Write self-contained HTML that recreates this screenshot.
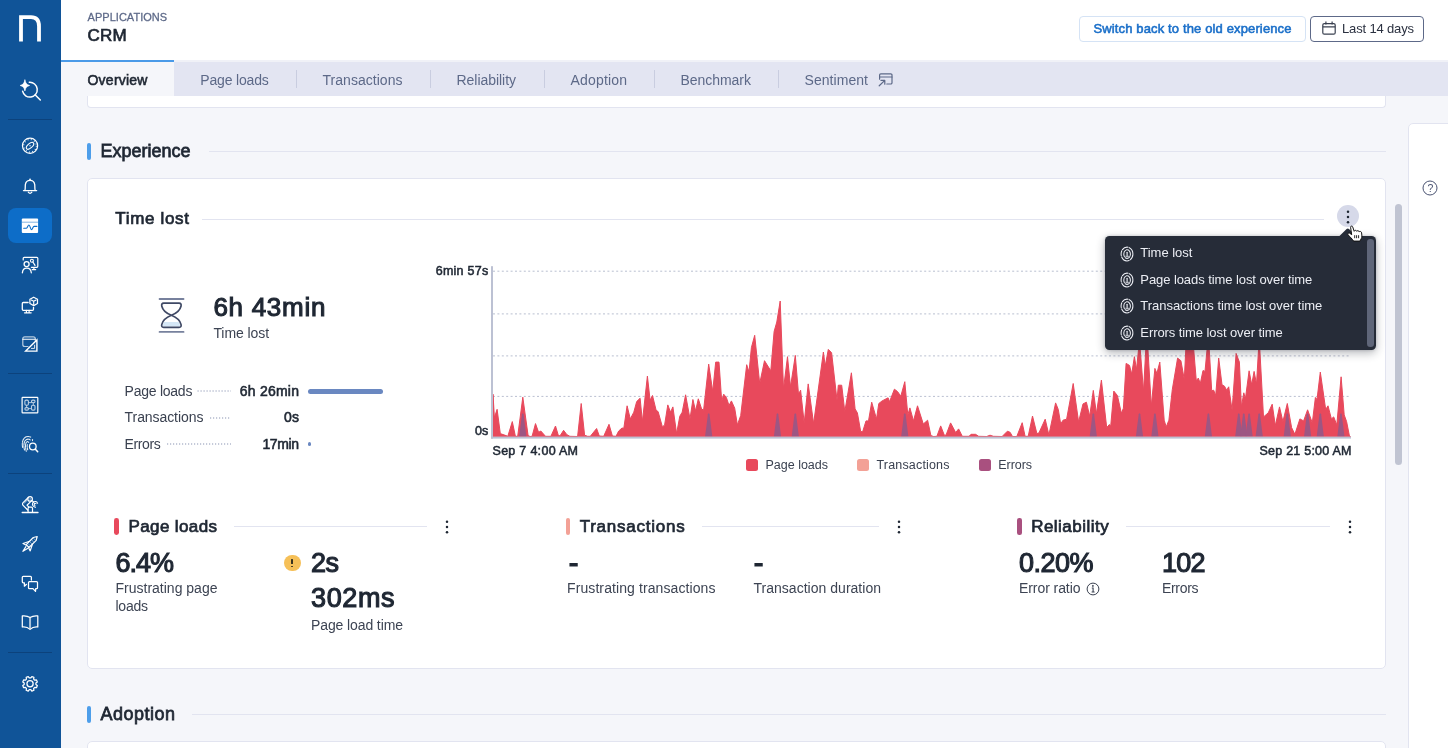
<!DOCTYPE html>
<html lang="en"><head><meta charset="utf-8"><title>CRM - Applications</title>
<style>
html,body{margin:0;padding:0;}
body{width:1448px;height:748px;overflow:hidden;position:relative;background:#f5f6fa;font-family:"Liberation Sans",Arial,sans-serif;}
.a{position:absolute;}
.t{position:absolute;white-space:nowrap;z-index:5;}
.card{position:absolute;background:#fff;border:1px solid #e2e4f0;box-sizing:border-box;}
.hl{position:absolute;height:1px;background:#e2e4f0;}
.sb svg{position:absolute;overflow:visible;}
.dot3 i{position:absolute;left:0;width:2.6px;height:2.6px;border-radius:50%;background:#1f2733;}
</style></head><body><div id="root" style="position:absolute;left:0;top:0;width:1448px;height:748px;will-change:transform;">
<div class="a" style="left:61px;top:0;width:1387px;height:61px;background:#fff"></div>
<div class="a" style="left:61px;top:60px;width:1387px;height:2px;background:#f0f1f7"></div>
<div class="a" style="left:61px;top:62px;width:1387px;height:34px;background:#e3e5f2"></div>
<div class="a" style="left:61px;top:60px;width:113px;height:36px;background:#f5f6fa;border-top:2px solid #4a9ae8;box-sizing:border-box"></div>
<div class="a" style="left:296px;top:70px;width:1px;height:18px;background:#c9cde0"></div><div class="a" style="left:430px;top:70px;width:1px;height:18px;background:#c9cde0"></div><div class="a" style="left:544px;top:70px;width:1px;height:18px;background:#c9cde0"></div><div class="a" style="left:654px;top:70px;width:1px;height:18px;background:#c9cde0"></div><div class="a" style="left:778px;top:70px;width:1px;height:18px;background:#c9cde0"></div>
<svg class="a" style="left:877px;top:71.700px" width="17" height="16" viewBox="0 0 17 16" fill="none" stroke="#5d6988" stroke-width="1.200" stroke-linecap="round" stroke-linejoin="round"><path d="M2.600,7.200 V3 a1.200,1.200 0 0 1 1.200,-1.200 H13.800 a1.200,1.200 0 0 1 1.200,1.200 V10.800 a1.200,1.200 0 0 1 -1.200,1.200 H9.800"/><path d="M2.600,5h12.400"/><path d="M2.200,13.800 L7.600,8.600 M4,8.400 H7.800 V12.200"/></svg>
<div class="a" style="left:1079px;top:16px;width:227px;height:26px;border:1px solid #d5e3f5;border-radius:4px;box-sizing:border-box;background:#fff"></div>
<div class="a" style="left:1310px;top:16px;width:114px;height:26px;border:1px solid #5d6988;border-radius:4px;box-sizing:border-box;background:#fff"></div>
<svg class="a" style="left:1321px;top:20px" width="16" height="16" viewBox="0 0 16 16" fill="none" stroke="#3a4150" stroke-width="1.200" stroke-linejoin="round"><rect x="1.800" y="3.600" width="12.400" height="10.600" rx="1.500"/><path d="M1.800,6.800h12.400M4.900,1.400v3M11.100,1.400v3"/></svg>
<div class="card" style="left:87px;top:96px;width:1299px;height:12px;border-radius:0 0 4px 4px;border-top:none"></div>
<div class="a" style="left:87px;top:143px;width:4px;height:17px;border-radius:2px;background:#4d9eea"></div>
<div class="hl" style="left:209px;top:151px;width:1177px"></div>
<div class="card" style="left:87px;top:178px;width:1299px;height:491px;border-radius:5px"></div>
<div class="hl" style="left:202px;top:219px;width:1122px"></div>
<div class="a" style="left:1337.100px;top:205.200px;width:21.800px;height:21.800px;border-radius:50%;background:#d6d9e9"></div>
<svg class="a" style="left:1343.90px;top:207.50px" width="8" height="18" viewBox="-4 -9 8 18"><circle cx="0" cy="-5.300" r="1.250" fill="#1f2733"/><circle cx="0" cy="0" r="1.250" fill="#1f2733"/><circle cx="0" cy="5.300" r="1.250" fill="#1f2733"/></svg>
<svg class="a" style="left:150px;top:290px" width="44" height="50" viewBox="150 290 44 50" fill="none" stroke-linecap="round" stroke-linejoin="round"><path d="M159.600,299h23.900M159.600,331.900h23.900" stroke="#77819d" stroke-width="1.900"/><path d="M164.300,322.100 H178.500 C179.600,323.500 180.100,325 179.900,326.500 H162.900 C162.700,325 163.200,323.500 164.300,322.100Z" fill="#d5e7f6"/><path d="M163.700,303.200 H179.100 Q181.700,303.300 181,306.200 C179.800,311.200 176,313.400 171.400,315.300 C166.800,313.400 163,311.200 161.800,306.200 Q161.100,303.300 163.700,303.200 Z M163.700,327.400 H179.100 Q181.700,327.300 181,324.400 C179.800,319.400 176,317.200 171.400,315.300 C166.800,317.200 163,319.400 161.800,324.400 Q161.100,327.300 163.700,327.400 Z" stroke="#3f4965" stroke-width="1.700"/></svg>
<svg class="a" style="left:0;top:390px" width="400" height="2"><line x1="197.5" x2="231" y1="1" y2="1" stroke="#b3b9cd" stroke-width="1.300" stroke-dasharray="1.200 1.800"/></svg>
<svg class="a" style="left:0;top:416.5px" width="400" height="2"><line x1="210" x2="231" y1="1" y2="1" stroke="#b3b9cd" stroke-width="1.300" stroke-dasharray="1.200 1.800"/></svg>
<svg class="a" style="left:0;top:442.5px" width="400" height="2"><line x1="167" x2="231" y1="1" y2="1" stroke="#b3b9cd" stroke-width="1.300" stroke-dasharray="1.200 1.800"/></svg>
<div class="a" style="left:307.700px;top:388.500px;width:75.600px;height:5.800px;border-radius:3px;background:#6a88c1"></div>
<div class="a" style="left:307.700px;top:441.800px;width:3.600px;height:4.600px;border-radius:2px;background:#6a88c1"></div>
<svg class="a" style="left:0;top:0;z-index:1" width="1448" height="748" viewBox="0 0 1448 748">
<line x1="493" x2="1351" y1="271.2" y2="271.2" stroke="#b9bfd0" stroke-width="1" stroke-dasharray="2 2.4"/>
<line x1="493" x2="1351" y1="313.9" y2="313.9" stroke="#b9bfd0" stroke-width="1" stroke-dasharray="2 2.4"/>
<line x1="493" x2="1351" y1="355.9" y2="355.9" stroke="#b9bfd0" stroke-width="1" stroke-dasharray="2 2.4"/>
<line x1="493" x2="1351" y1="396.4" y2="396.4" stroke="#b9bfd0" stroke-width="1" stroke-dasharray="2 2.4"/>
<path d="M493,436.6 L493.0,394.2 494.4,417.6 497.1,409.3 500.3,433.6 506.0,435.6 507.8,436.3 512.3,421.6 515.4,436.3 517.7,436.3 522.8,397.2 528.1,435.6 530.1,436.5 532.1,436.3 535.5,423.6 538.6,432.3 540.8,431.0 545.5,436.3 550.9,436.3 555.5,426.0 558.5,436.0 560.2,435.6 563.6,430.3 566.9,434.7 569.9,436.3 577.6,436.5 581.2,403.5 584.6,435.2 587.6,436.3 590.3,436.3 596.6,428.5 599.3,436.0 603.7,436.3 609.0,424.3 612.4,436.0 616.0,436.3 618.7,431.0 622.0,428.0 623.8,428.3 627.1,405.8 630.3,418.9 633.8,412.2 636.7,401.5 640.1,398.2 642.4,421.6 647.4,376.1 650.1,400.2 652.5,395.5 656.1,410.2 658.1,411.6 662.4,426.9 664.6,424.9 667.8,404.9 670.5,412.2 672.9,406.9 676.6,433.6 679.8,416.2 682.2,412.2 685.6,394.8 690.0,418.9 692.9,399.5 695.6,410.9 698.3,398.8 701.6,408.9 703.6,410.2 708.7,364.1 712.7,391.5 715.7,362.1 719.0,362.1 721.7,400.9 723.7,394.2 726.4,397.5 729.0,405.5 731.4,400.9 734.7,408.2 737.4,424.9 740.7,415.6 746.7,364.7 749.0,372.1 751.4,347.6 754.7,335.3 759.7,383.5 764.5,360.7 770.8,370.8 774.1,331.5 776.8,322.0 780.2,301.0 783.5,388.8 787.5,356.7 790.5,386.8 795.3,355.4 798.5,394.2 800.6,390.2 804.2,422.9 808.2,383.9 813.6,423.6 823.4,352.0 825.2,366.1 828.3,349.4 831.6,352.7 837.0,400.2 838.3,385.2 841.7,385.2 844.8,411.6 851.4,372.8 855.1,408.9 857.4,412.9 860.7,431.6 862.7,431.6 866.0,420.9 868.5,420.9 871.7,402.2 876.5,418.9 878.8,403.5 882.1,400.9 888.1,397.8 889.5,401.8 894.4,389.2 897.5,391.5 900.8,396.2 904.8,381.7 907.8,414.9 909.9,407.9 913.5,420.9 917.5,405.8 923.3,424.0 927.6,420.2 930.9,435.6 933.6,436.5 936.9,436.3 940.7,425.9 944.3,435.2 946.0,435.2 950.6,422.9 955.7,432.6 958.6,428.9 962.3,436.3 969.0,436.3 971.0,434.3 975.5,434.3 978.7,436.3 986.7,436.5 990.0,435.2 993.4,436.3 1002.1,436.5 1007.4,431.2 1010.1,432.3 1012.5,436.5 1016.8,436.5 1022.2,422.7 1025.1,436.3 1028.2,436.3 1032.5,416.0 1036.9,433.6 1038.9,433.0 1045.2,419.2 1048.9,435.0 1055.6,402.9 1058.3,409.5 1060.7,424.0 1063.0,420.2 1066.6,419.2 1073.2,383.5 1078.6,421.9 1083.0,403.9 1086.4,402.2 1089.7,416.2 1093.3,390.4 1096.4,413.6 1101.4,380.1 1106.7,427.6 1109.4,424.5 1110.7,426.3 1113.8,391.1 1117.4,395.5 1121.4,413.3 1123.4,408.2 1126.1,363.4 1129.5,365.4 1131.7,374.1 1134.4,356.7 1136.5,369.4 1139.5,340.0 1143.5,391.5 1146.8,330.0 1151.3,406.2 1154.9,368.4 1156.9,373.4 1159.8,362.1 1164.2,420.2 1166.2,426.9 1168.9,420.2 1172.3,389.5 1177.6,358.1 1180.9,360.7 1184.3,379.5 1186.5,335.0 1192.5,335.0 1196.3,380.8 1198.3,378.1 1200.3,383.5 1203.0,370.5 1205.0,371.4 1208.4,335.0 1211.7,390.8 1213.7,390.2 1215.7,395.5 1218.7,358.1 1222.0,384.8 1224.4,386.1 1226.7,390.2 1228.7,386.8 1232.1,410.2 1236.1,353.4 1239.4,362.1 1241.4,406.9 1243.8,392.8 1245.4,398.8 1249.1,370.8 1251.7,384.8 1254.1,371.4 1256.5,384.1 1259.2,338.0 1263.5,416.9 1268.2,412.9 1272.2,404.2 1275.3,425.6 1279.5,406.9 1282.9,421.6 1287.3,403.5 1291.6,427.6 1294.9,434.3 1299.9,418.9 1303.6,420.9 1307.6,409.8 1312.3,422.9 1315.4,397.5 1317.0,399.5 1320.3,372.1 1325.7,409.5 1328.0,405.8 1331.4,418.9 1333.7,416.9 1336.8,424.9 1341.1,376.8 1344.2,414.9 1346.6,421.6 1349.5,436.3 L1350.5,436.6 Z" fill="#e8495c" stroke="#e8495c" stroke-width="1" stroke-linejoin="round"/>
<path d="M519.2,436.6 L522.0,414.2 Q522.8,412.4 523.6,414.2 L526.4,436.6 Z" fill="#9d5683"/>
<path d="M705.1,436.6 L707.9,414.2 Q708.7,412.4 709.5,414.2 L712.3,436.6 Z" fill="#9d5683"/>
<path d="M773.9,436.6 L776.7,414.2 Q777.5,412.4 778.3,414.2 L781.1,436.6 Z" fill="#9d5683"/>
<path d="M791.7,436.6 L794.5,414.2 Q795.3,412.4 796.1,414.2 L798.9,436.6 Z" fill="#9d5683"/>
<path d="M901.2,436.6 L904.0,414.2 Q904.8,412.4 905.6,414.2 L908.4,436.6 Z" fill="#9d5683"/>
<path d="M1089.7,436.6 L1092.5,414.2 Q1093.3,412.4 1094.1,414.2 L1096.9,436.6 Z" fill="#9d5683"/>
<path d="M1135.9,436.6 L1138.7,414.2 Q1139.5,412.4 1140.3,414.2 L1143.1,436.6 Z" fill="#9d5683"/>
<path d="M1151.3,436.6 L1154.1,414.2 Q1154.9,412.4 1155.7,414.2 L1158.5,436.6 Z" fill="#9d5683"/>
<path d="M1204.8,436.6 L1207.6,414.2 Q1208.4,412.4 1209.2,414.2 L1212.0,436.6 Z" fill="#9d5683"/>
<path d="M1235.2,436.6 L1238.0,414.2 Q1238.8,412.4 1239.6,414.2 L1242.4,436.6 Z" fill="#9d5683"/>
<path d="M1240.2,436.6 L1243.0,414.2 Q1243.8,412.4 1244.6,414.2 L1247.4,436.6 Z" fill="#9d5683"/>
<path d="M1245.5,436.6 L1248.3,414.2 Q1249.1,412.4 1249.9,414.2 L1252.7,436.6 Z" fill="#9d5683"/>
<path d="M1255.6,436.6 L1258.4,414.2 Q1259.2,412.4 1260.0,414.2 L1262.8,436.6 Z" fill="#9d5683"/>
<path d="M1283.7,436.6 L1286.5,414.2 Q1287.3,412.4 1288.1,414.2 L1290.9,436.6 Z" fill="#9d5683"/>
<path d="M1304.0,436.6 L1306.8,414.2 Q1307.6,412.4 1308.4,414.2 L1311.2,436.6 Z" fill="#9d5683"/>
<path d="M1316.7,436.6 L1319.5,414.2 Q1320.3,412.4 1321.1,414.2 L1323.9,436.6 Z" fill="#9d5683"/>
<path d="M1337.3,436.6 L1340.1,414.2 Q1340.9,412.4 1341.7,414.2 L1344.5,436.6 Z" fill="#9d5683"/>
<rect x="491" y="266.200" width="2" height="172.400" fill="#bcc1d3"/>
<rect x="491" y="436.600" width="860" height="2" fill="#bcc1d3"/>
</svg>
<div class="a" style="left:745.600px;top:459.200px;width:12px;height:12px;border-radius:2.500px;background:#e8495c"></div>
<div class="a" style="left:856.600px;top:459.200px;width:12px;height:12px;border-radius:2.500px;background:#f3a196"></div>
<div class="a" style="left:978.600px;top:459.200px;width:12px;height:12px;border-radius:2.500px;background:#a9507f"></div>
<div class="a" style="left:114px;top:518px;width:4.800px;height:17px;border-radius:2.400px;background:#e8495c"></div>
<div class="hl" style="left:234px;top:526px;width:193px"></div>
<svg class="a" style="left:443.00px;top:517.50px" width="8" height="18" viewBox="-4 -9 8 18"><circle cx="0" cy="-5.300" r="1.250" fill="#1f2733"/><circle cx="0" cy="0" r="1.250" fill="#1f2733"/><circle cx="0" cy="5.300" r="1.250" fill="#1f2733"/></svg>
<div class="a" style="left:566px;top:518px;width:4px;height:17px;border-radius:2px;background:#f3a196"></div>
<div class="hl" style="left:702px;top:526px;width:177px"></div>
<svg class="a" style="left:894.50px;top:517.50px" width="8" height="18" viewBox="-4 -9 8 18"><circle cx="0" cy="-5.300" r="1.250" fill="#1f2733"/><circle cx="0" cy="0" r="1.250" fill="#1f2733"/><circle cx="0" cy="5.300" r="1.250" fill="#1f2733"/></svg>
<div class="a" style="left:1017px;top:518px;width:4.500px;height:17px;border-radius:2.200px;background:#a9507f"></div>
<div class="hl" style="left:1126px;top:526px;width:204px"></div>
<svg class="a" style="left:1346.00px;top:517.50px" width="8" height="18" viewBox="-4 -9 8 18"><circle cx="0" cy="-5.300" r="1.250" fill="#1f2733"/><circle cx="0" cy="0" r="1.250" fill="#1f2733"/><circle cx="0" cy="5.300" r="1.250" fill="#1f2733"/></svg>
<div class="a" style="left:284px;top:554.500px;width:16.800px;height:16.800px;border-radius:50%;background:#f6c058"></div>
<div class="a" style="left:291.200px;top:558.800px;width:1.800px;height:5.400px;background:#3a3320;border-radius:0.500px"></div><div class="a" style="left:291.200px;top:565.600px;width:1.800px;height:1.800px;background:#3a3320;border-radius:0.500px"></div>
<svg class="a" style="left:1086px;top:582px" width="14" height="14" viewBox="0 0 14 14" fill="none" stroke="#3a4150" stroke-width="1"><circle cx="7" cy="7" r="5.900"/><path d="M5.800,6h1.300v4M5.600,10h3" stroke-width="1.100"/><circle cx="6.900" cy="3.900" r="0.500" fill="#3a4150"/></svg>
<div class="a" style="left:87px;top:706px;width:4px;height:17px;border-radius:2px;background:#4d9eea"></div>
<div class="hl" style="left:192px;top:714px;width:1194px"></div>
<div class="card" style="left:87px;top:741px;width:1299px;height:20px;border-radius:5px 5px 0 0"></div>
<div class="card" style="left:1408px;top:123px;width:50px;height:640px;border-radius:5px 0 0 0"></div>
<svg class="a" style="left:1422px;top:179.600px" width="16" height="16" viewBox="0 0 16 16" fill="none" stroke="#4a5372" stroke-width="1"><circle cx="8" cy="8" r="7"/></svg>
<div class="a" style="left:1395.300px;top:204px;width:6.500px;height:261px;border-radius:3.500px;background:#c0c4d2"></div>
<div class="a" style="left:0;top:0;width:61px;height:748px;background:#105498;z-index:6">
<div class="a" style="left:8px;top:119.1px;width:44px;height:1.2px;background:#0c427c"></div>
<div class="a" style="left:8px;top:372.5px;width:44px;height:1.2px;background:#0c427c"></div>
<div class="a" style="left:8px;top:472.9px;width:44px;height:1.2px;background:#0c427c"></div>
<div class="a" style="left:8px;top:651.8px;width:44px;height:1.2px;background:#0c427c"></div>
<div class="a" style="left:7.900px;top:207.800px;width:44.200px;height:35.300px;border-radius:8px;background:#0d6dc8"></div>
<svg class="a" style="left:0;top:0" width="61" height="748" viewBox="0 0 61 748" fill="none" stroke="#fff" stroke-width="1.300" stroke-linecap="round" stroke-linejoin="round">
<path d="M21,41.400 V17.200 H31 C36.800,17.200 39,20.600 39,26.200 V41.400" stroke-width="3.800" stroke-linecap="butt" stroke-linejoin="miter"/>
<path d="M29.300,82.300 A7.400,7.400 0 1 1 22.600,91.200" stroke-width="1.500"/><path d="M35.300,95 L40.300,100" stroke-width="1.500"/>
<path d="M24.900,80.100 C25.500,83.300 26.700,84.700 29.600,85.500 C26.700,86.300 25.500,87.700 24.900,90.900 C24.300,87.700 23.100,86.300 20.200,85.500 C23.100,84.700 24.300,83.300 24.900,80.100 Z" fill="#fff" stroke="#fff" stroke-width="0.700"/>
<circle cx="30.050" cy="145.800" r="7.600" stroke-width="1.200"/>
<circle cx="30.050" cy="145.800" r="6.300" stroke-width="1.300" stroke-dasharray="0.900 2.400" stroke-linecap="butt" opacity="0.9"/>
<ellipse cx="30.050" cy="145.800" rx="4.500" ry="2.200" transform="rotate(-42 30.050 145.800)" stroke-width="1.100"/>
<circle cx="30.050" cy="145.800" r="0.800" fill="#fff" stroke="none" opacity="0.8"/>
<path d="M23.500,190.600 H36.600" stroke-width="1.400"/>
<path d="M24.900,190.400 C25.500,188.500 25.100,186 25.400,184.300 C25.900,181.400 27.800,180.300 30.050,180.300 C32.300,180.300 34.200,181.400 34.700,184.300 C35,186 34.600,188.500 35.200,190.400" stroke-width="1.300"/>
<circle cx="30.050" cy="179.300" r="0.900" fill="#fff" stroke="none"/>
<path d="M28.300,192.200 Q30.050,194.500 31.800,192.200" stroke-width="1.300"/>
<rect x="21.800" y="218.600" width="16.300" height="14.500" rx="1" fill="#fff" stroke="none"/>
<path d="M21.800,222.200 H38.100" stroke="#0d6dc8" stroke-width="0.700" opacity="0.75" stroke-linecap="butt"/>
<path d="M23.700,228.200 H26.400 C27.600,228.200 27.800,225 28.900,225 C30.100,225 30.400,229.600 31.500,229.600 C32.600,229.600 32.900,226.400 34.100,226.400 H36.900" stroke="#0d6dc8" stroke-width="1.100"/>
<path d="M23.200,260 V258.300 a1,1 0 0 1 1,-1 H36.800 a1,1 0 0 1 1,1 V266.300 a1,1 0 0 1 -1,1 H31.400" stroke-width="1.200"/>
<path d="M33.900,267.500 V269.500 M32.200,269.600 H35.700" stroke-width="1.200"/>
<circle cx="26.600" cy="264.100" r="2.500" stroke-width="1.300"/>
<path d="M22.400,272.800 C22.600,269.800 24.300,268.200 26.800,268.200 C29.300,268.200 31,269.800 31.300,272.800" stroke-width="1.300"/>
<circle cx="31.900" cy="260.700" r="1.500" stroke-width="1.100"/><path d="M32.900,262 L35,265.400" stroke-width="1.200"/>
<path d="M28.100,302.500 H23.300 a1,1 0 0 0 -1,1 V309.300 a1,1 0 0 0 1,1 H32.500 a1,1 0 0 0 1,-1 V307.300" stroke-width="1.300"/>
<path d="M26.400,310.400 V312.600 M29.100,310.400 V312.600 M24.500,312.800 H31.200" stroke-width="1.200"/>
<path d="M33.700,297.200 L37.500,299.300 V303.500 L33.700,305.600 L29.900,303.500 V299.300 Z" stroke-width="1.200"/>
<path d="M31.300,300 L33.700,301.300 L36.100,300 M33.700,301.300 V305.200" stroke-width="1.100"/>
<path d="M28,346.500 H24.800 a2,2 0 0 1 -2,-2 V338.800 a2,2 0 0 1 2,-2 H33.300 a2,2 0 0 1 2,2 V340.600" stroke-width="1.200" opacity="0.7"/>
<path d="M22.800,339.300 H35.300" stroke-width="1.100"/>
<path d="M25.700,351.100 L36.900,340 V351.100 Z" stroke-width="1.400" stroke-linejoin="miter"/>
<path d="M34.600,345.200 V348.400 H31.400" stroke-width="1" opacity="0.85"/>
<rect x="22.100" y="397.300" width="15.700" height="15.500" rx="0.600" stroke-width="1.200"/>
<g opacity="0.72" stroke-width="1.100"><rect x="24.900" y="400.100" width="3.500" height="5.200" rx="1.200"/><rect x="31.500" y="400.100" width="3.500" height="2.700" rx="1.200"/><rect x="24.900" y="407.600" width="3.500" height="2.500" rx="1.200"/><rect x="31.500" y="405.200" width="3.500" height="4.900" rx="1.200"/><path d="M28.400,402.600 H31.500 M28.400,408.600 H31.500 M26.600,405.300 V407.600 M33.300,402.800 V405.200" stroke-width="0.900"/></g>
<g stroke-width="1.050" opacity="0.92"><path d="M22.600,447.500 C21.800,443 22.400,438.200 26.400,436.800 C28,436.300 29.600,436.600 30.700,437.100" stroke-dasharray="4.500 0.900"/><path d="M24.500,450 C23.400,446 23.600,440.800 26.600,439.400 C28,438.800 29.400,439.200 30.200,440" stroke-dasharray="3.800 0.900"/><path d="M26.300,451.300 C25.200,447.500 25.100,443.200 26.800,441.900 C27.600,441.400 28.400,441.700 28.700,442.400" stroke-dasharray="3 0.900"/><path d="M27.300,444.500 C27,446.500 27.200,448.500 27.900,450.300" stroke-dasharray="2.200 0.900"/><path d="M32.500,439.600 V440.600"/></g>
<circle cx="32.800" cy="446.500" r="3.300" stroke-width="1.300"/><path d="M35.400,449.200 L37.700,451.700" stroke-width="1.500"/>
<path d="M22.200,512.500 H38" stroke-width="1.300"/>
<path d="M28.100,512.300 V508.200 a1.100,1.100 0 0 1 1.100,-1.100 H31.400 a1.100,1.100 0 0 1 1.100,1.100 V512.300" stroke-width="1.200"/>
<path d="M28.300,497.500 L23.100,502.700 a1.900,1.900 0 0 0 0,2.700 L27.700,510 M31.700,500.600 L27,505.200 L28.600,506.900" stroke-width="1.200"/>
<circle cx="30.100" cy="498.900" r="2.300" stroke-width="1.200"/><circle cx="30.100" cy="498.900" r="0.600" fill="#fff" stroke="none"/>
<path d="M24.600,502.800 L27.200,500.200 M25.600,507.600 L27,509" stroke-width="0.900" opacity="0.8"/>
<path d="M32.400,500.800 L33.600,502.200" stroke-width="1.200"/>
<path d="M37.600,503.300 C37,501.500 35,500.900 33.500,502 C32,503.100 32.100,505.300 33.600,506.400 L35.500,507.300 M36,503.600 C35.400,503 34.500,503.200 34.200,503.900 C34,504.500 34.300,505.100 34.900,505.400" stroke-width="1.100"/>
<path d="M37.200,536.500 L33.300,537.500 L26.200,544.700 L29,547.500 L36.200,540.400 Z" stroke-width="1.200"/>
<path d="M29.600,541.300 L23,543.500 L26.400,545.300 M32.400,544.200 L30.200,550.900 L28.400,547.500" stroke-width="1.200"/>
<path d="M25.900,546.600 L22.900,551.300 L27.500,548.400" stroke-width="1.200"/>
<path d="M28.300,543.800 L30,545.500 M30.100,542 L31.800,543.700 M31.900,540.200 L33.600,541.900 M33.700,538.400 L35.400,540.100" stroke-width="0.700" opacity="0.7"/>
<path d="M31.400,580 V577.300 a1,1 0 0 0 -1,-1 H23.300 a1,1 0 0 0 -1,1 V581.800 a1,1 0 0 0 1,1 H24.400 V586.200 L26.500,584.300" stroke-width="1.250"/>
<path d="M29.500,581.500 H36.500 a1,1 0 0 1 1,1 V587.700 a1,1 0 0 1 -1,1 H35.700 L35.500,591.400 L33,588.700 H29.500 a1,1 0 0 1 -1,-1 V582.500 a1,1 0 0 1 1,-1 Z" stroke-width="1.250"/>
<path d="M30.050,617.500 C28,616.100 25,615.600 22.300,615.900 V627 C25,626.700 28,627.400 30.050,629.400 C32.100,627.400 35.100,626.700 37.800,627 V615.900 C35.100,615.600 32.100,616.100 30.050,617.500 Z" stroke-width="1.250"/>
<path d="M30.050,618 V628.600" stroke-width="2" opacity="0.65" stroke-linecap="butt"/>
<path d="M35.90,684.57 L37.33,685.61 L36.48,687.66 L34.73,687.39 L33.64,688.48 L33.91,690.23 L31.86,691.08 L30.82,689.65 L29.28,689.65 L28.24,691.08 L26.19,690.23 L26.46,688.48 L25.37,687.39 L23.62,687.66 L22.77,685.61 L24.20,684.57 L24.20,683.03 L22.77,681.99 L23.62,679.94 L25.37,680.21 L26.46,679.12 L26.19,677.37 L28.24,676.52 L29.28,677.95 L30.82,677.95 L31.86,676.52 L33.91,677.37 L33.64,679.12 L34.73,680.21 L36.48,679.94 L37.33,681.99 L35.90,683.03 Z" stroke-width="1.250" stroke-linejoin="round"/>
<circle cx="30.050" cy="683.800" r="3.100" stroke-width="1.250"/>
</svg></div>
<div class="a" style="left:1105.300px;top:236.200px;width:270.500px;height:113.400px;border-radius:4.500px;background:#262c38;box-shadow:0 3px 10px rgba(30,35,50,0.33), 0 0 3px rgba(30,35,50,0.2);z-index:4"></div>
<svg class="a" style="left:1336px;top:226px;z-index:4" width="24" height="12" viewBox="1336 226 24 12"><path d="M1339,236.500 L1346.600,229 Q1347.800,227.800 1349,229 L1356.600,236.500 Z" fill="#262c38"/></svg>
<div class="a" style="left:1367px;top:238.500px;width:6.600px;height:108.500px;border-radius:3.300px;background:#5f6679;z-index:4"></div>
<svg class="a" style="z-index:5;left:1118.9px;top:244.5px" width="16" height="18" viewBox="-8 -9 16 18" fill="none" stroke="#eceef4" stroke-width="1.050" stroke-linecap="round"><ellipse cx="0" cy="0" rx="5.900" ry="6.900" stroke-dasharray="6.500 1.300 9 1.300 5 1.300"/><ellipse cx="0.100" cy="0.100" rx="3.300" ry="4.300" stroke-dasharray="8 1.200 6.500 1.200"/><path d="M0.100,-1.700 V1.900" stroke-width="1.150"/><path d="M-1.300,2.400 C-0.600,3 0.800,3 1.500,2.400" stroke-width="0.900"/></svg><svg class="a" style="z-index:5;left:1118.9px;top:270.8px" width="16" height="18" viewBox="-8 -9 16 18" fill="none" stroke="#eceef4" stroke-width="1.050" stroke-linecap="round"><ellipse cx="0" cy="0" rx="5.900" ry="6.900" stroke-dasharray="6.500 1.300 9 1.300 5 1.300"/><ellipse cx="0.100" cy="0.100" rx="3.300" ry="4.300" stroke-dasharray="8 1.200 6.500 1.200"/><path d="M0.100,-1.700 V1.900" stroke-width="1.150"/><path d="M-1.300,2.400 C-0.600,3 0.800,3 1.500,2.400" stroke-width="0.900"/></svg><svg class="a" style="z-index:5;left:1118.9px;top:297.2px" width="16" height="18" viewBox="-8 -9 16 18" fill="none" stroke="#eceef4" stroke-width="1.050" stroke-linecap="round"><ellipse cx="0" cy="0" rx="5.900" ry="6.900" stroke-dasharray="6.500 1.300 9 1.300 5 1.300"/><ellipse cx="0.100" cy="0.100" rx="3.300" ry="4.300" stroke-dasharray="8 1.200 6.500 1.200"/><path d="M0.100,-1.700 V1.900" stroke-width="1.150"/><path d="M-1.300,2.400 C-0.600,3 0.800,3 1.500,2.400" stroke-width="0.900"/></svg><svg class="a" style="z-index:5;left:1118.9px;top:323.6px" width="16" height="18" viewBox="-8 -9 16 18" fill="none" stroke="#eceef4" stroke-width="1.050" stroke-linecap="round"><ellipse cx="0" cy="0" rx="5.900" ry="6.900" stroke-dasharray="6.500 1.300 9 1.300 5 1.300"/><ellipse cx="0.100" cy="0.100" rx="3.300" ry="4.300" stroke-dasharray="8 1.200 6.500 1.200"/><path d="M0.100,-1.700 V1.900" stroke-width="1.150"/><path d="M-1.300,2.400 C-0.600,3 0.800,3 1.500,2.400" stroke-width="0.900"/></svg>
<svg class="a" style="left:1344px;top:222px;z-index:7" width="22" height="22" viewBox="1344 222 22 22"><path d="M1350.600,227.400 C1350.300,226 1352.300,225.600 1352.700,226.900 L1354.200,231.300 C1354.600,230 1356.400,230 1356.700,231.300 C1357.200,230.300 1358.900,230.500 1359.200,231.800 C1359.800,231 1361.400,231.400 1361.600,232.800 L1361.900,236 C1362,238 1360.600,239.600 1359.900,241.100 L1353.600,241.100 C1352.400,238.800 1349.600,236.800 1348,234.700 C1347.300,233.600 1348.600,232.500 1349.700,233.200 L1351.700,234.700 Z" fill="#fff" stroke="#111" stroke-width="1" stroke-linejoin="round"/><path d="M1354.700,235.200V238.200M1356.600,235.200V238.200M1358.600,235.200V238.200" stroke="#111" stroke-width="0.900" fill="none"/></svg><span class="t" id="t0" style="top:10.00px;font-size:11px;line-height:14px;font-weight:400;color:#5d6988;-webkit-text-stroke:0.26px #5d6988;letter-spacing:0.021px;left:87.60px;">APPLICATIONS</span>
<span class="t" id="t1" style="top:25.00px;font-size:17px;line-height:22px;font-weight:400;color:#1f2733;-webkit-text-stroke:0.71px #1f2733;letter-spacing:0.141px;left:87.60px;">CRM</span>
<span class="t" id="t2" style="top:71.00px;font-size:14px;line-height:18px;font-weight:400;color:#1f2733;-webkit-text-stroke:0.59px #1f2733;letter-spacing:0.234px;left:87.50px;">Overview</span>
<span class="t" id="t3" style="top:71.00px;font-size:14px;line-height:18px;font-weight:400;color:#5d6988;letter-spacing:-0.174px;left:200.30px;">Page loads</span>
<span class="t" id="t4" style="top:71.00px;font-size:14px;line-height:18px;font-weight:400;color:#5d6988;letter-spacing:0.034px;left:322.50px;">Transactions</span>
<span class="t" id="t5" style="top:71.00px;font-size:14px;line-height:18px;font-weight:400;color:#5d6988;letter-spacing:-0.042px;left:456.50px;">Reliability</span>
<span class="t" id="t6" style="top:71.00px;font-size:14px;line-height:18px;font-weight:400;color:#5d6988;letter-spacing:0.174px;left:570.50px;">Adoption</span>
<span class="t" id="t7" style="top:71.00px;font-size:14px;line-height:18px;font-weight:400;color:#5d6988;letter-spacing:-0.039px;left:680.50px;">Benchmark</span>
<span class="t" id="t8" style="top:71.00px;font-size:14px;line-height:18px;font-weight:400;color:#5d6988;letter-spacing:0.057px;left:804.50px;">Sentiment</span>
<span class="t" id="t9" style="top:20.00px;font-size:13px;line-height:17px;font-weight:400;color:#1a6fc9;-webkit-text-stroke:0.55px #1a6fc9;letter-spacing:0.135px;left:1093.50px;">Switch back to the old experience</span>
<span class="t" id="t10" style="top:20.00px;font-size:13px;line-height:17px;font-weight:400;color:#2b3140;letter-spacing:-0.156px;left:1342.00px;">Last 14 days</span>
<span class="t" id="t11" style="top:140.00px;font-size:18px;line-height:23px;font-weight:400;color:#1f2733;-webkit-text-stroke:0.76px #1f2733;letter-spacing:-0.007px;left:100.50px;">Experience</span>
<span class="t" id="t12" style="top:208.00px;font-size:17px;line-height:22px;font-weight:400;color:#1f2733;-webkit-text-stroke:0.71px #1f2733;letter-spacing:0.671px;left:115.30px;">Time lost</span>
<span class="t" id="t13" style="top:290.00px;font-size:26px;line-height:34px;font-weight:400;color:#1f2733;-webkit-text-stroke:1.09px #1f2733;letter-spacing:0.719px;left:213.40px;">6h 43min</span>
<span class="t" id="t14" style="top:324.00px;font-size:14px;line-height:18px;font-weight:400;color:#3d4453;letter-spacing:-0.060px;left:213.40px;">Time lost</span>
<span class="t" id="t15" style="top:382.00px;font-size:14px;line-height:18px;font-weight:400;color:#3a4150;letter-spacing:-0.251px;left:124.60px;">Page loads</span>
<span class="t" id="t16" style="top:408.00px;font-size:14px;line-height:18px;font-weight:400;color:#3a4150;letter-spacing:-0.075px;left:124.60px;">Transactions</span>
<span class="t" id="t17" style="top:435.00px;font-size:14px;line-height:18px;font-weight:400;color:#3a4150;letter-spacing:-0.385px;left:124.60px;">Errors</span>
<span class="t" id="t18" style="top:382.00px;font-size:14px;line-height:18px;font-weight:400;color:#1f2733;-webkit-text-stroke:0.59px #1f2733;letter-spacing:0.229px;right:1148.77px;">6h 26min</span>
<span class="t" id="t19" style="top:408.00px;font-size:14px;line-height:18px;font-weight:400;color:#1f2733;-webkit-text-stroke:0.59px #1f2733;letter-spacing:0.203px;right:1148.80px;">0s</span>
<span class="t" id="t20" style="top:435.00px;font-size:14px;line-height:18px;font-weight:400;color:#1f2733;-webkit-text-stroke:0.59px #1f2733;letter-spacing:-0.385px;right:1149.39px;">17min</span>
<span class="t" id="t21" style="top:263.00px;font-size:12.5px;line-height:16px;font-weight:400;color:#1f2733;-webkit-text-stroke:0.53px #1f2733;letter-spacing:0.252px;right:959.55px;">6min 57s</span>
<span class="t" id="t22" style="top:423.00px;font-size:12.5px;line-height:16px;font-weight:400;color:#1f2733;-webkit-text-stroke:0.53px #1f2733;letter-spacing:0.097px;right:959.70px;">0s</span>
<span class="t" id="t23" style="top:443.00px;font-size:12.5px;line-height:16px;font-weight:400;color:#1f2733;-webkit-text-stroke:0.53px #1f2733;letter-spacing:0.290px;left:492.50px;">Sep 7 4:00 AM</span>
<span class="t" id="t24" style="top:443.00px;font-size:12.5px;line-height:16px;font-weight:400;color:#1f2733;-webkit-text-stroke:0.53px #1f2733;letter-spacing:0.234px;right:96.27px;">Sep 21 5:00 AM</span>
<span class="t" id="t25" style="top:457.00px;font-size:12.5px;line-height:16px;font-weight:400;color:#3a4150;letter-spacing:-0.007px;left:765.50px;">Page loads</span>
<span class="t" id="t26" style="top:457.00px;font-size:12.5px;line-height:16px;font-weight:400;color:#3a4150;letter-spacing:0.173px;left:876.50px;">Transactions</span>
<span class="t" id="t27" style="top:457.00px;font-size:12.5px;line-height:16px;font-weight:400;color:#3a4150;letter-spacing:-0.066px;left:998.30px;">Errors</span>
<span class="t" id="t28" style="top:516.00px;font-size:17px;line-height:22px;font-weight:400;color:#1f2733;-webkit-text-stroke:0.71px #1f2733;letter-spacing:0.380px;left:128.50px;">Page loads</span>
<span class="t" id="t29" style="top:516.00px;font-size:17px;line-height:22px;font-weight:400;color:#1f2733;-webkit-text-stroke:0.71px #1f2733;letter-spacing:0.756px;left:579.70px;">Transactions</span>
<span class="t" id="t30" style="top:516.00px;font-size:17px;line-height:22px;font-weight:400;color:#1f2733;-webkit-text-stroke:0.71px #1f2733;letter-spacing:0.475px;left:1031.20px;">Reliability</span>
<span class="t" id="t31" style="top:546.00px;font-size:27px;line-height:35px;font-weight:400;color:#1f2733;-webkit-text-stroke:1.13px #1f2733;letter-spacing:-1.016px;left:115.50px;">6.4%</span>
<span class="t" id="t32" style="top:579.00px;font-size:14px;line-height:18px;font-weight:400;color:#3d4453;letter-spacing:0.003px;left:115.50px;">Frustrating page</span>
<span class="t" id="t33" style="top:597.00px;font-size:14px;line-height:18px;font-weight:400;color:#3d4453;letter-spacing:-0.242px;left:115.50px;">loads</span>
<span class="t" id="t34" style="top:546.00px;font-size:27px;line-height:35px;font-weight:400;color:#1f2733;-webkit-text-stroke:1.13px #1f2733;letter-spacing:-0.531px;left:311.00px;">2s</span>
<span class="t" id="t35" style="top:581.00px;font-size:27px;line-height:35px;font-weight:400;color:#1f2733;-webkit-text-stroke:1.13px #1f2733;letter-spacing:0.613px;left:311.00px;">302ms</span>
<span class="t" id="t36" style="top:616.00px;font-size:14px;line-height:18px;font-weight:400;color:#3d4453;letter-spacing:-0.108px;left:311.00px;">Page load time</span>
<span class="t" id="t37" style="top:544.00px;font-size:29px;line-height:38px;font-weight:400;color:#1f2733;-webkit-text-stroke:1.22px #1f2733;left:568.70px;">-</span>
<span class="t" id="t38" style="top:579.00px;font-size:14px;line-height:18px;font-weight:400;color:#3d4453;letter-spacing:0.096px;left:567.00px;">Frustrating transactions</span>
<span class="t" id="t39" style="top:544.00px;font-size:29px;line-height:38px;font-weight:400;color:#1f2733;-webkit-text-stroke:1.22px #1f2733;left:753.80px;">-</span>
<span class="t" id="t40" style="top:579.00px;font-size:14px;line-height:18px;font-weight:400;color:#3d4453;letter-spacing:0.021px;left:753.50px;">Transaction duration</span>
<span class="t" id="t41" style="top:546.00px;font-size:27px;line-height:35px;font-weight:400;color:#1f2733;-webkit-text-stroke:1.13px #1f2733;letter-spacing:-0.516px;left:1019.00px;">0.20%</span>
<span class="t" id="t42" style="top:579.00px;font-size:14px;line-height:18px;font-weight:400;color:#3d4453;letter-spacing:-0.073px;left:1019.00px;">Error ratio</span>
<span class="t" id="t43" style="top:546.00px;font-size:27px;line-height:35px;font-weight:400;color:#1f2733;-webkit-text-stroke:1.13px #1f2733;letter-spacing:-0.781px;left:1162.00px;">102</span>
<span class="t" id="t44" style="top:579.00px;font-size:14px;line-height:18px;font-weight:400;color:#3d4453;letter-spacing:-0.325px;left:1162.00px;">Errors</span>
<span class="t" id="t45" style="top:703.00px;font-size:18px;line-height:23px;font-weight:400;color:#1f2733;-webkit-text-stroke:0.76px #1f2733;letter-spacing:0.491px;left:100.50px;">Adoption</span>
<span class="t" id="t46" style="top:244.00px;font-size:13px;line-height:17px;font-weight:400;color:#eceef4;letter-spacing:-0.031px;left:1140.30px;">Time lost</span>
<span class="t" id="t47" style="top:271.00px;font-size:13px;line-height:17px;font-weight:400;color:#eceef4;letter-spacing:-0.074px;left:1140.30px;">Page loads time lost over time</span>
<span class="t" id="t48" style="top:297.00px;font-size:13px;line-height:17px;font-weight:400;color:#eceef4;letter-spacing:-0.033px;left:1140.30px;">Transactions time lost over time</span>
<span class="t" id="t49" style="top:324.00px;font-size:13px;line-height:17px;font-weight:400;color:#eceef4;letter-spacing:-0.079px;left:1140.30px;">Errors time lost over time</span>
<span class="t" id="t50" style="top:181.00px;font-size:10.5px;line-height:14px;font-weight:400;color:#4a5372;left:1427.40px;">?</span>
</div></body></html>
